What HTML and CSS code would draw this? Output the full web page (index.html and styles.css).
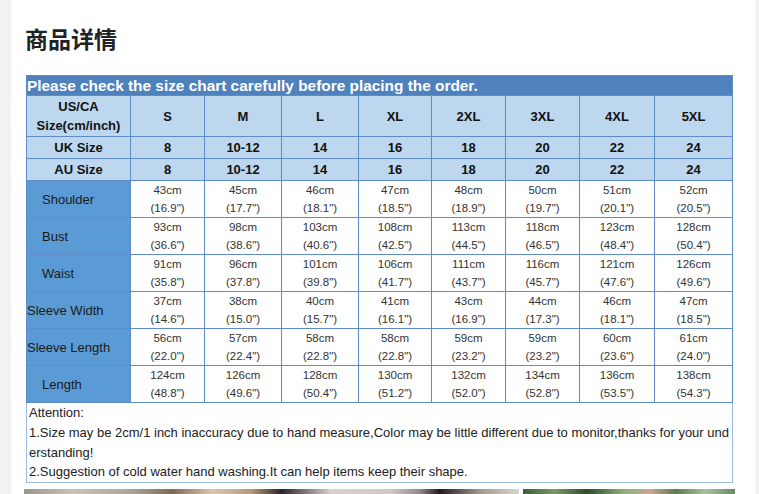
FILE: index.html
```html
<!DOCTYPE html>
<html lang="zh">
<head>
<meta charset="utf-8">
<title>商品详情</title>
<link rel="stylesheet" href="styles.css">
</head>
<body>
<div class="card">
  <h2 class="title">商品详情</h2>
  <table class="chart">
    <colgroup>
      <col class="c-label"><col class="c-s"><col class="c-m"><col class="c-l"><col class="c-xl"><col class="c-2xl"><col class="c-3xl"><col class="c-4xl"><col class="c-5xl">
    </colgroup>
    <tr class="r-banner"><th colspan="9" class="banner">Please check the size chart carefully before placing the order.</th></tr>
    <tr class="r-head">
      <th class="hd">US/CA<br>Size(cm/inch)</th>
      <th class="hd">S</th><th class="hd">M</th><th class="hd">L</th><th class="hd">XL</th><th class="hd">2XL</th><th class="hd">3XL</th><th class="hd">4XL</th><th class="hd">5XL</th>
    </tr>
    <tr class="r-size">
      <th class="hd">UK Size</th>
      <th class="hd">8</th><th class="hd">10-12</th><th class="hd">14</th><th class="hd">16</th><th class="hd">18</th><th class="hd">20</th><th class="hd">22</th><th class="hd">24</th>
    </tr>
    <tr class="r-size">
      <th class="hd">AU Size</th>
      <th class="hd">8</th><th class="hd">10-12</th><th class="hd">14</th><th class="hd">16</th><th class="hd">18</th><th class="hd">20</th><th class="hd">22</th><th class="hd">24</th>
    </tr>
    <tr class="r-data">
      <th class="lbl indent">Shoulder</th>
      <td>43cm<br>(16.9")</td><td>45cm<br>(17.7")</td><td>46cm<br>(18.1")</td><td>47cm<br>(18.5")</td><td>48cm<br>(18.9")</td><td>50cm<br>(19.7")</td><td>51cm<br>(20.1")</td><td>52cm<br>(20.5")</td>
    </tr>
    <tr class="r-data">
      <th class="lbl indent">Bust</th>
      <td>93cm<br>(36.6")</td><td>98cm<br>(38.6")</td><td>103cm<br>(40.6")</td><td>108cm<br>(42.5")</td><td>113cm<br>(44.5")</td><td>118cm<br>(46.5")</td><td>123cm<br>(48.4")</td><td>128cm<br>(50.4")</td>
    </tr>
    <tr class="r-data">
      <th class="lbl indent">Waist</th>
      <td>91cm<br>(35.8")</td><td>96cm<br>(37.8")</td><td>101cm<br>(39.8")</td><td>106cm<br>(41.7")</td><td>111cm<br>(43.7")</td><td>116cm<br>(45.7")</td><td>121cm<br>(47.6")</td><td>126cm<br>(49.6")</td>
    </tr>
    <tr class="r-data">
      <th class="lbl">Sleeve Width</th>
      <td>37cm<br>(14.6")</td><td>38cm<br>(15.0")</td><td>40cm<br>(15.7")</td><td>41cm<br>(16.1")</td><td>43cm<br>(16.9")</td><td>44cm<br>(17.3")</td><td>46cm<br>(18.1")</td><td>47cm<br>(18.5")</td>
    </tr>
    <tr class="r-data">
      <th class="lbl">Sleeve Length</th>
      <td>56cm<br>(22.0")</td><td>57cm<br>(22.4")</td><td>58cm<br>(22.8")</td><td>58cm<br>(22.8")</td><td>59cm<br>(23.2")</td><td>59cm<br>(23.2")</td><td>60cm<br>(23.6")</td><td>61cm<br>(24.0")</td>
    </tr>
    <tr class="r-data">
      <th class="lbl indent">Length</th>
      <td>124cm<br>(48.8")</td><td>126cm<br>(49.6")</td><td>128cm<br>(50.4")</td><td>130cm<br>(51.2")</td><td>132cm<br>(52.0")</td><td>134cm<br>(52.8")</td><td>136cm<br>(53.5")</td><td>138cm<br>(54.3")</td>
    </tr>
    <tr class="r-note">
      <td colspan="9" class="note">
        <p>Attention:</p>
        <p>1.Size may be 2cm/1 inch inaccuracy due to hand measure,Color may be little different due to monitor,thanks for your und<br>erstanding!</p>
        <p>2.Suggestion of cold water hand washing.It can help items keep their shape.</p>
      </td>
    </tr>
  </table>
  <div class="photos">
    <div class="photo photo-a"></div>
    <div class="photo photo-b"></div>
  </div>
</div>
</body>
</html>
```
FILE: styles.css
```css
html, body {
  margin: 0;
  padding: 0;
}
body {
  background: #f2f2f2;
  font-family: "Liberation Sans", Arial, sans-serif;
  overflow: hidden;
}
.card {
  margin-left: 11px;
  width: 744px;
  min-height: 494px;
  background: #ffffff;
  padding: 22px 0 0 15px;
  box-sizing: border-box;
}
.title {
  margin: 0 0 21px -1px;
  font-family: "Noto Sans CJK SC", "Noto Sans", sans-serif;
  font-size: 23px;
  line-height: 32px;
  font-weight: 700;
  color: #222222;
}
.chart {
  width: 706px;
  table-layout: fixed;
  border-collapse: collapse;
  border: 1px solid #9fbbe0;
}
.c-label { width: 104px; }
.c-s { width: 74px; }
.c-m { width: 77px; }
.c-l { width: 77px; }
.c-xl { width: 73px; }
.c-2xl { width: 74px; }
.c-3xl { width: 74px; }
.c-4xl { width: 75px; }
.c-5xl { width: 78px; }
.chart th, .chart td {
  padding: 0;
  border: 1px solid #5f8cc8;
}
.r-banner { height: 20px; }
.banner {
  background: #4f81bd;
  color: #ffffff;
  font-size: 15.4px;
  font-weight: 700;
  text-align: left;
  padding-left: 2px;
  line-height: 18px;
  white-space: nowrap;
}
.r-head { height: 41px; }
.r-size { height: 22px; }
.hd {
  background: #bdd7ee;
  color: #111111;
  font-size: 13px;
  font-weight: 700;
  line-height: 19px;
  text-align: center;
}
.r-data { height: 36.8px; }
.lbl {
  background: #5b9bd5;
  color: #1a1a1a;
  font-size: 13px;
  font-weight: 400;
  text-align: left;
  padding-left: 2px;
}
.lbl.indent { padding-left: 15px; }
.chart td {
  background: #ffffff;
  color: #333333;
  font-size: 11.5px;
  line-height: 18px;
  text-align: center;
}
.chart .note {
  text-align: left;
  padding: 0 0 0 2px;
  font-size: 13px;
  line-height: 19.8px;
  color: #222222;
  border: 1px solid #9fbbe0;
  border-top: 1px solid #9fbbe0;
  white-space: nowrap;
  overflow: hidden;
}
.note p { margin: 0; }
.photos {
  display: flex;
  gap: 4px;
  margin: 6px 0 0 -2px;
  height: 20px;
}
.photo { height: 20px; }
.photo-a {
  width: 495px;
  background: linear-gradient(90deg, #9a958f 0%, #c8c2ba 10%, #a9a39b 22%, #7a6a58 30%, #d8c8b0 38%, #b09a80 46%, #2a2624 52%, #d7d2cb 62%, #cfcac4 74%, #8e8a86 80%, #1e1c1b 84%, #a09890 92%, #d8d4cf 100%);
}
.photo-b {
  width: 212px;
  background: linear-gradient(90deg, #3e5a3a 0%, #7a9a6a 15%, #2f4a30 30%, #90b080 48%, #c9a79a 60%, #5a7a52 72%, #a8c0a0 86%, #6a8a62 100%);
}
```
